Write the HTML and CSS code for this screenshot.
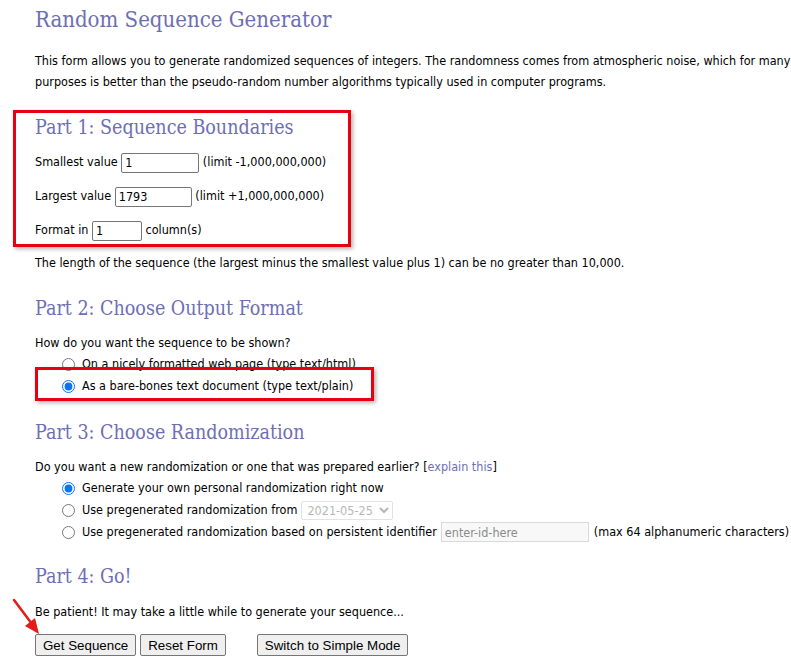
FILE: index.html
```html
<!DOCTYPE html>
<html lang="en">
<head>
    <meta charset="UTF-8">
    <title>RANDOM.ORG - Sequence Generator</title>
    <link rel="stylesheet" href="styles.css">
</head>
<body>

    <h1>Random Sequence Generator</h1>

    <p class="intro">This form allows you to generate randomized sequences of integers. The randomness comes from atmospheric noise, which for many purposes is better than the pseudo-random number algorithms typically used in computer programs.</p>

    <form>
        <!-- Part 1 -->
        <h2>Part 1: Sequence Boundaries</h2>
        <div class="field">Smallest value <input type="text" class="num min" value="1"> (limit -1,000,000,000)</div>
        <div class="field">Largest value <input type="text" class="num max" value="1793"> (limit +1,000,000,000)</div>
        <div class="field">Format in <input type="text" class="num col" value="1"> column(s)</div>
        <p class="note">The length of the sequence (the largest minus the smallest value plus 1) can be no greater than 10,000.</p>

        <!-- Part 2 -->
        <h2>Part 2: Choose Output Format</h2>
        <p class="question">How do you want the sequence to be shown?</p>
        <div class="options">
            <label><input type="radio" name="format"> On a nicely formatted web page (type text/html)</label>
            <label><input type="radio" name="format" checked> As a bare-bones text document (type text/plain)</label>
        </div>

        <!-- Part 3 -->
        <h2>Part 3: Choose Randomization</h2>
        <p class="question">Do you want a new randomization or one that was prepared earlier? [<a href="#">explain this</a>]</p>
        <div class="options last">
            <label><input type="radio" name="rnd" checked> Generate your own personal randomization right now</label>
            <label><input type="radio" name="rnd"> Use pregenerated randomization from
                <select disabled><option>2021-05-25</option></select></label>
            <label><input type="radio" name="rnd"> Use pregenerated randomization based on persistent identifier
                <input type="text" class="ident" placeholder="enter-id-here" disabled> (max 64 alphanumeric characters)</label>
        </div>

        <!-- Part 4 -->
        <h2>Part 4: Go!</h2>
        <p class="question go">Be patient! It may take a little while to generate your sequence...</p>
        <div class="buttons">
            <button type="button">Get Sequence</button>
            <button type="reset">Reset Form</button>
            <button type="button" class="simple">Switch to Simple Mode</button>
        </div>
    </form>

    <!-- annotations -->
    <div class="mark mark-part1"></div>
    <div class="mark mark-plain"></div>
    <svg class="arrow" width="40" height="45" viewBox="0 0 40 45">
        <line x1="2" y1="2" x2="20" y2="26" stroke="#e31b1b" stroke-width="2.5" stroke-linecap="round"/>
        <polygon points="27,36 13,28 23,20" fill="#e31b1b"/>
    </svg>

</body>
</html>
```

FILE: styles.css
```css
body {
    margin: 0;
    padding: 6px 0 0 35px;
    font-family: "DejaVu Sans Condensed", "DejaVu Sans", sans-serif;
    font-size: 12.5px;
    line-height: 21px;
    color: #000;
    background: #fff;
    position: relative;
}

h1, h2 {
    font-family: "DejaVu Serif Condensed", "DejaVu Serif", Georgia, serif;
    font-weight: normal;
    color: #6e6eb4;
    margin: 0;
}

h1 {
    font-size: 22px;
    line-height: 28px;
}

h2 {
    font-size: 19.5px;
    line-height: 24px;
    padding-top: 2px;
}

p {
    margin: 0;
}

.intro {
    margin: 16px 0 22px;
}

/* Part 1 fields */
.field {
    height: 24px;
    line-height: 24px;
    margin-top: 10px;
}

.num, select, .ident {
    font: 12.5px "DejaVu Sans Condensed", "DejaVu Sans", sans-serif;
    box-sizing: border-box;
    vertical-align: middle;
}

.num {
    height: 20px;
    border: 1px solid #767676;
    border-radius: 2px;
    padding: 0 3px;
}

.min { width: 78px; }
.max { width: 77px; }
.col { width: 50px; }

.note {
    margin: 10px 0 22px;
}

.question {
    margin-top: 11px;
}

.question.go {
    margin-top: 12px;
}

/* radio options */
.options {
    display: flex;
    flex-direction: column;
    padding-left: 27px;
    margin-bottom: 22px;
}

.options.last {
    margin-bottom: 20px;
}

.options label {
    height: 22px;
    line-height: 22px;
    display: flex;
    align-items: center;
    white-space: nowrap;
}

.options input[type=radio] {
    margin: 0 7px 0 0;
    width: 13px;
    height: 13px;
    accent-color: #0a75f0;
}

select {
    margin-left: 4px;
    color: #9a9a9a;
    height: 19px;
    width: 92px;
    border: 1px solid #d6d6d6;
    border-radius: 2px;
    background: #fff;
    padding: 0 1px;
}

.ident {
    margin: 0 5px 0 4px;
    width: 148px;
    height: 20px;
    border: 1px solid #d9d9d9;
    background: #f8f8f8;
    padding: 0 3px;
}

.ident::placeholder {
    color: #8a8a8a;
}

a {
    color: #6e6eb4;
    text-decoration: none;
}

/* buttons */
.buttons {
    margin-top: 12px;
    display: flex;
    gap: 4px;
}

.buttons button {
    font: 13.33px "Liberation Sans", Arial, sans-serif;
    height: 22px;
    padding: 1px 7px;
    background: #efefef;
    border: 1px solid #767676;
    border-radius: 2px;
    color: #000;
}

.buttons .simple {
    margin-left: 27px;
}

/* red annotation boxes */
.mark {
    position: absolute;
    border: 3px solid #e60012;
    box-shadow: 2px 2px 4px rgba(0, 0, 0, 0.3);
    pointer-events: none;
}

.mark-part1 {
    left: 13px;
    top: 110px;
    width: 332px;
    height: 131px;
}

.mark-plain {
    left: 35px;
    top: 367px;
    width: 333px;
    height: 28px;
}

.arrow {
    position: absolute;
    left: 12px;
    top: 598px;
}
```
